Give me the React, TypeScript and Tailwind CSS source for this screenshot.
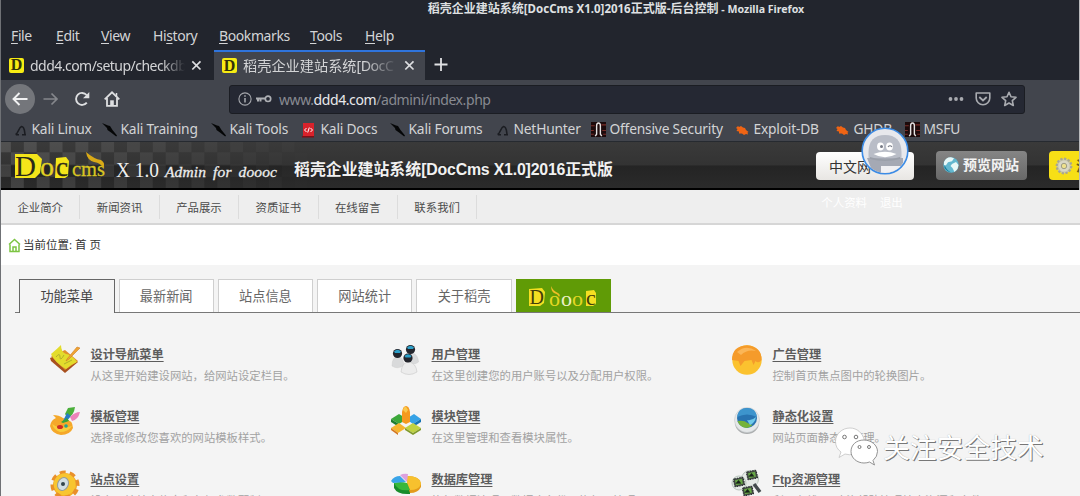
import React from "react";

const CJK = "font-['Noto_Sans','Noto_Sans_CJK_SC',sans-serif]";

function DocIcon() {
  return (
    <span className="flex h-[15px] w-[15px] shrink-0 items-center justify-center rounded-[2px] bg-[#f7ec13] font-['Liberation_Serif',serif] text-[16px] font-bold leading-none text-[#33310a]">
      D
    </span>
  );
}

function CloseX() {
  return (
    <svg width="11" height="11" viewBox="0 0 11 11" className="shrink-0">
      <path d="M1.3 1.3l8.2 8.2M9.5 1.3L1.3 9.5" stroke="#dcdde0" strokeWidth="1.7" fill="none" />
    </svg>
  );
}

function DragonMark() {
  return (
    <svg width="16" height="16" viewBox="0 0 16 16">
      <path d="M2.500 12.500c3-1 3-7 6-8 3 0 3 4 3.500 8M3 12.800h3M9 12.800h4" stroke="#1b1d22" strokeWidth="1.600" fill="none" />
    </svg>
  );
}

function KaliMark() {
  return (
    <svg width="16" height="16" viewBox="0 0 16 16">
      <path d="M0 1l6 2.500 2 .5 2.500 4 4.500 5.500-.8 1L9 10.500 5.500 8 5 6z" fill="#050607" />
    </svg>
  );
}

function DocsMark() {
  return (
    <svg width="14" height="16" viewBox="0 0 14 16">
      <path d="M1 1h11v13H1z" fill="#d9222b" />
      <path d="M0 14h12v1.500H0z" fill="#7c0f16" />
      <path d="M4.500 6L2.500 8l2 2M8.500 6l2 2-2 2M7.300 5.500L5.700 10.500" stroke="#fff" fill="none" />
    </svg>
  );
}

function OffsecMark() {
  return (
    <svg width="15" height="15" viewBox="0 0 16 16">
      <path d="M0 0h16v16H0z" fill="#1c0a0b" />
      <path d="M0 4h4M11 3h5M0 9h3M12 9h4M0 13h3M13 13h3" stroke="#7a2c28" strokeWidth="1.200" />
      <path d="M4.500 15l1.500-2V4q0-3 2-3t2 3v9l1.500 2" stroke="#e6e3e3" strokeWidth="1.500" fill="none" />
    </svg>
  );
}

function ExploitMark() {
  return (
    <svg width="14" height="14" viewBox="0 0 14 14">
      <path d="M1 5l2-2 1 1 2-1 2 1.500 2 .5 1 2 2.500 2-1 .5.500 2-2-.5-2 1-2-1.500-3 0L4 8.500 1.500 8 2.500 6z" fill="#ef6414" />
    </svg>
  );
}

const bookmarks = [
  { label: "Kali Linux", mark: <DragonMark />, slot: "w-[89px]" },
  { label: "Kali Training", mark: <KaliMark />, slot: "w-[109px]" },
  { label: "Kali Tools", mark: <KaliMark />, slot: "w-[91px]" },
  { label: "Kali Docs", mark: <DocsMark />, slot: "w-[88px]" },
  { label: "Kali Forums", mark: <KaliMark />, slot: "w-[105px]" },
  { label: "NetHunter", mark: <DragonMark />, slot: "w-[96px]" },
  { label: "Offensive Security", mark: <OffsecMark />, slot: "w-[144px]" },
  { label: "Exploit-DB", mark: <ExploitMark />, slot: "w-[100px]" },
  { label: "GHDB", mark: <ExploitMark />, slot: "w-[70px]" },
  { label: "MSFU", mark: <OffsecMark />, slot: "w-[70px]" },
];

const menus = [
  { pre: "", key: "F", post: "ile", slot: "w-[45px]" },
  { pre: "", key: "E", post: "dit", slot: "w-[45px]" },
  { pre: "", key: "V", post: "iew", slot: "w-[52px]" },
  { pre: "Hi", key: "s", post: "tory", slot: "w-[66px]" },
  { pre: "", key: "B", post: "ookmarks", slot: "w-[91px]" },
  { pre: "", key: "T", post: "ools", slot: "w-[55px]" },
  { pre: "", key: "H", post: "elp", slot: "w-[40px]" },
];

function BrowserChrome() {
  return (
    <div className="h-[142px] shrink-0 bg-[#22252d] font-['Noto_Sans','Noto_Sans_CJK_SC',sans-serif] text-[#d3d4d6]">
      <div className="flex h-[21px] items-start justify-center pl-[151px] text-[12px] font-bold leading-[17px] text-[#dfe0e2]">
        <span className="whitespace-nowrap">
          稻壳企业建站系统<span className="text-[11.500px]">[DocCms X1.0]2016</span>正式版-后台控制
          <span className="text-[10.600px]"> - Mozilla Firefox</span>
        </span>
      </div>
      <div className="flex h-[29px] items-center pl-[10px] text-[14px] tracking-[-0.4px]">
        {menus.map((m) => (
          <span key={m.key} className={m.slot + " shrink-0 whitespace-nowrap"}>
            {m.pre}
            <span className="underline underline-offset-2">{m.key}</span>
            {m.post}
          </span>
        ))}
      </div>
      <div className="flex h-[30px] text-[14px]">
        <div className="flex w-[213px] items-center pl-[8px]">
          <DocIcon />
          <span className="ml-[6px] w-[155px] whitespace-nowrap tracking-[-0.53px] [mask-image:linear-gradient(to_right,black_85%,transparent)]">
            ddd4.com/setup/checkdb
          </span>
          <span className="ml-[6px]"><CloseX /></span>
        </div>
        <div className="flex w-[211px] items-center border-t-2 border-[#2f74dc] bg-[#42454d] pb-px pl-[8px]">
          <DocIcon />
          <span className="ml-[6px] w-[155px] whitespace-nowrap text-[14.200px] [mask-image:linear-gradient(to_right,black_78%,transparent)]">
            稻壳企业建站系统<span className="tracking-[-0.5px]">[DocC</span>
          </span>
          <span className="ml-[6px]"><CloseX /></span>
        </div>
        <svg width="16" height="16" viewBox="0 0 16 16" className="ml-[8px] mt-[7px]">
          <path d="M8 1v13M1.500 7.500h13" stroke="#e0e1e3" strokeWidth="1.800" />
        </svg>
      </div>
      <div className="h-[62px] border-b border-[#262a30] bg-[#42454d]">
        <div className="flex h-[38px] items-center pl-[4px]">
          <div className="flex h-[30px] w-[30px] items-center justify-center rounded-full bg-[#74767b]">
            <svg width="16" height="14" viewBox="0 0 16 14">
              <path d="M15.500 7H2M7.500 1L1.500 7l6 6" stroke="#f1f1f2" strokeWidth="1.900" fill="none" />
            </svg>
          </div>
          <svg width="16" height="14" viewBox="0 0 16 14" className="ml-[8px]">
            <path d="M.5 7H14M8.500 1.500L14 7l-5.500 5.500" stroke="#85878c" strokeWidth="1.700" fill="none" />
          </svg>
          <svg width="16" height="16" viewBox="0 0 16 16" className="ml-[15px]">
            <path d="M12.800 11.600A6 6 0 1 1 12.600 4" stroke="#dedfe1" strokeWidth="1.900" fill="none" />
            <path d="M15.300 1v6.300H9z" fill="#dedfe1" />
          </svg>
          <svg width="16" height="16" viewBox="0 0 16 16" className="ml-[14px]">
            <path d="M.7 8.300L8 1.300l7.300 7M3 7v7.800h10V7" stroke="#dedfe1" strokeWidth="1.800" fill="none" />
            <path d="M6.200 9.300h3.600v5H6.200z" fill="#dedfe1" />
            <path d="M12.500 2v4" stroke="#dedfe1" strokeWidth="1.500" />
          </svg>
          <div className="ml-[109px] flex h-[29px] w-[796px] items-center rounded-[3px] border border-[#1b1d23] bg-[#252833] pl-[8px] pr-[7px] text-[14px]">
            <svg width="14" height="14" viewBox="0 0 14 14">
              <circle cx="7" cy="7" r="6.100" stroke="#a5a7ac" fill="none" strokeWidth="1.100" />
              <path d="M7 6v4.500M7 3.300v1.500" stroke="#b5b7bb" strokeWidth="1.400" />
            </svg>
            <svg width="16" height="10" viewBox="0 0 16 10" className="ml-[4px]">
              <path d="M0 4.500h9M2 5v2.500M4.500 5v2.500" stroke="#adafb4" strokeWidth="2" />
              <circle cx="12" cy="4.800" r="2.700" stroke="#adafb4" strokeWidth="1.700" fill="none" />
            </svg>
            <span className="ml-[7px] tracking-[-0.41px] text-[#888a91]">
              www.<span className="text-[#e9e9ec]">ddd4.com</span>/admini/index.php
            </span>
            <span className="grow" />
            <svg width="16" height="6" viewBox="0 0 16 6">
              <circle cx="2.500" cy="3" r="1.900" fill="#a9abb0" />
              <circle cx="8" cy="3" r="1.900" fill="#a9abb0" />
              <circle cx="13.500" cy="3" r="1.900" fill="#a9abb0" />
            </svg>
            <svg width="16" height="14" viewBox="0 0 16 14" className="ml-[11px]">
              <path d="M1.200 1h13.600v5a6.800 6.800 0 0 1-13.600 0z" stroke="#a9abb0" strokeWidth="1.600" fill="none" strokeLinejoin="round" />
              <path d="M4.300 5L8 8.500 11.700 5" stroke="#a9abb0" strokeWidth="1.800" fill="none" />
            </svg>
            <svg width="16" height="16" viewBox="0 0 16 16" className="ml-[10px]">
              <path d="M8 1.300l2 4.500 5 .5-3.700 3.300 1 4.900L8 12l-4.300 2.500 1-4.900L1 6.300l5-.5z" stroke="#a9abb0" strokeWidth="1.600" fill="none" strokeLinejoin="round" />
            </svg>
          </div>
        </div>
        <div className="flex h-[23px] items-center pl-[12px] text-[13.800px] tracking-[-0.2px]">
          {bookmarks.map((b) => (
            <span key={b.label} className={b.slot + " flex shrink-0 items-center whitespace-nowrap"}>
              <span className="flex w-[18.500px] shrink-0">{b.mark}</span>
              {b.label}
            </span>
          ))}
        </div>
      </div>
    </div>
  );
}

function Checks() {
  const cells = [];
  for (let r = 0; r < 4; r++) {
    for (let c = 0; c < 24; c++) {
      if ((r + c) % 2 === 0) {
        cells.push(
          <rect key={r + "-" + c} x={c * 12.9 - 3} y={r * 12.3 - 2} width="12.9" height="12.3" fill="#ffffff" opacity={0.12 * (1 - c / 25)} />
        );
      }
    }
  }
  return <svg width="310" height="47" className="absolute left-0 top-0">{cells}</svg>;
}

function AdminHeader() {
  return (
    <div className="relative flex h-[48px] shrink-0 overflow-hidden border-b-2 border-black bg-[linear-gradient(#3a3a3a_0%,#333_50%,#242424_52%,#2b2b2b_100%)]">
      <Checks />
      <svg width="275" height="46" viewBox="0 0 275 46" className="relative ml-[5px] shrink-0">
        <path d="M9 12l22 0 5 5-2 14-5 5H9zM50 16l10-1 3 4-1 15-3 2H49z" fill="#f4e51a" />
        <g className="font-['Liberation_Serif',serif]">
          <text x="9" y="34" fontSize="29" fill="#2a2919">D</text>
          <text x="34" y="34" fontSize="28" fill="#e3d424" stroke="#e3d424" strokeWidth=".4">o</text>
          <text x="50" y="34" fontSize="27" fill="#2a2919" stroke="#2a2919" strokeWidth=".4">c</text>
          <text x="66" y="34" fontSize="22" fill="#d8c522" stroke="#d8c522" strokeWidth=".3" textLength="33" lengthAdjust="spacingAndGlyphs">cms</text>
          <text x="110" y="34.500" fontSize="21" fill="#eee" textLength="43" lengthAdjust="spacingAndGlyphs">X 1.0</text>
          <text x="159" y="34.500" fontSize="15.500" fontStyle="italic" fill="#eee" stroke="#eee" strokeWidth=".3" textLength="112" wordSpacing="3">Admin for doooc</text>
        </g>
        <path d="M80 10q8 7 15 8 5 3 2 8-2-5-9-6-7-2-8-10" fill="#d9aa17" />
      </svg>
      <span className="relative ml-[13px] w-[522px] shrink-0 whitespace-nowrap pt-[16px] font-['Liberation_Sans','Noto_Sans_CJK_SC',sans-serif] text-[15.900px] font-bold leading-[24px] text-[#f1f1f1]">
        稻壳企业建站系统<span className="tracking-[-0.2px]">[DocCms X1.0]2016</span>正式版
      </span>
      <div className="mt-[10px] flex h-[28px] w-[98px] shrink-0 items-center rounded-[4px] bg-[linear-gradient(#fff,#e8e6e3)] pl-[13px] font-['Noto_Sans_CJK_SC',sans-serif] text-[14px] text-[#333]">
        中文网
      </div>
      <div className="ml-[22px] mt-[9px] flex h-[29px] w-[91px] shrink-0 items-center rounded-[4px] bg-[linear-gradient(#858585,#686868)] pb-[2px] pl-[7px] font-['Noto_Sans_CJK_SC',sans-serif] text-[14px] font-bold text-[#f3f3f3]">
        <svg width="16" height="16" viewBox="0 0 16 16" className="mr-[4px] shrink-0">
          <circle cx="8" cy="8" r="7.700" fill="#62b7cf" />
          <path d="M1 5Q3 0 8 .3l3 1-2 3-4 1-2 3-2 0zM9 7l4-2 2.500 3-1 4-3 3-2-4-2-2z" fill="#e8f8f8" />
          <path d="M1.500 11q3 4 7 4.500Q4 14 1.500 8z" fill="#157b98" />
        </svg>
        <span className="whitespace-nowrap">预览网站</span>
      </div>
      <div className="ml-[22px] mt-[9px] flex h-[29px] w-[32px] shrink-0 items-center overflow-hidden rounded-l-[4px] bg-[#f7df16] pl-[6px] font-['Noto_Sans_CJK_SC',sans-serif] text-[14px] font-bold text-[#6b6115]">
        <svg width="18" height="18" viewBox="0 0 18 18" className="mr-[3px] shrink-0">
          <circle cx="9" cy="9" r="7.300" fill="#c8c6ac" stroke="#aaa78e" strokeWidth="2.200" strokeDasharray="2.300 1.500" />
          <circle cx="9" cy="9" r="5.500" fill="#d9d7c5" />
          <circle cx="9" cy="9" r="2.700" fill="#eee18d" stroke="#9f9d85" />
        </svg>
        <span className="whitespace-nowrap">清</span>
      </div>
    </div>
  );
}

function Assistant() {
  return (
    <svg width="50" height="50" viewBox="0 0 50 50" className="absolute left-[859px] top-[126px]">
      <defs>
        <clipPath id="round"><circle cx="25" cy="25" r="22" /></clipPath>
      </defs>
      <circle cx="25" cy="25" r="22.800" fill="#e7e8ec" stroke="#3c8ce6" strokeWidth="1.600" />
      <g clipPath="url(#round)">
        <path d="M8.500 35V26Q9 9 25 9t16.500 17v9z" fill="#b9bdc7" />
        <path d="M7 32h36v5l-4 5v8H11v-8z" fill="#a5a9b4" />
        <path d="M21 40h19v12H21z" fill="#f0f0f3" />
        <path d="M10 31q15 5 30 0v2q-15 4-30 0z" fill="#9a9fa9" />
      </g>
      <ellipse cx="20.500" cy="20.500" rx="3.400" ry="4" fill="#fff" />
      <ellipse cx="29.500" cy="20.500" rx="3.400" ry="4" fill="#fff" />
      <circle cx="21.500" cy="20.500" r="1.500" fill="#777b86" />
      <path d="M28 21q2-2.500 4 0" stroke="#777b86" fill="none" strokeWidth="1.200" />
      <path d="M13.500 28q11.500-4.500 23 0-11.500 6.500-23 0" fill="#fff" />
    </svg>
  );
}

const navItems = ["企业简介", "新闻资讯", "产品展示", "资质证书", "在线留言", "联系我们"];
const tabs = ["最新新闻", "站点信息", "网站统计", "关于稻壳"];

function NoteIcon() {
  return (
    <svg width="32" height="32" viewBox="0 0 32 32">
      <path d="M1 15l15-6 13 10-13 11L2 18z" fill="#a8501e" />
      <path d="M2 13l14-6 13 11-13 9z" fill="#e0912c" />
      <path d="M2 11Q8 6 12 2q0 7 5 9 5 0 11 8-7 3-11 7Q6 20 2 11" fill="#e3dc2c" />
      <path d="M7 14q4-5 4 0t4-2M15 21l8-4" stroke="#b1b02a" fill="none" />
      <path d="M18 16L28 4l3 1-11 11-3 2z" fill="#efa434" stroke="#cf7d24" strokeWidth=".6" />
    </svg>
  );
}

function UsersIcon() {
  const heads = [[7.5, 10.5], [20.5, 6.5], [18, 15]];
  return (
    <svg width="32" height="32" viewBox="0 0 32 32">
      <path d="M2 23q0-9 6-10 5 1 6 9-6 5-12 1M17 19q1-9 6-9 5 2 5.500 9-5 4-11.500 0" fill="#d9dadb" stroke="#c8c8c8" strokeWidth=".4" />
      <path d="M11 29q1-10 8-10 7 1 8 10-8 5-16 0" fill="#ececec" stroke="#c0c0c0" strokeWidth=".5" />
      {heads.map(([x, y]) => (
        <g key={x}>
          <circle cx={x} cy={y} r="4.600" fill="#23252c" />
          <path d={`M${x - 3.5} ${y - 2}q3.500-3.500 7 0l-1 1.500h-5z`} fill="#2c9fc8" />
        </g>
      ))}
    </svg>
  );
}

function BallIcon() {
  return (
    <svg width="32" height="32" viewBox="0 0 32 32">
      <circle cx="16" cy="17" r="14.700" fill="#fbc22f" />
      <path d="M1 17Q1 3 16 2.300 31 4 30.500 17q-3 4-6 1l-2 4-2-5-7 1-4 5-2-5z" fill="#f59b2b" />
      <path d="M6 9q9-8 19-1Q16 6 10 12z" fill="#fbb657" />
    </svg>
  );
}

function PaletteIcon() {
  return (
    <svg width="32" height="32" viewBox="0 0 32 32">
      <path d="M1 21q1-6 6-8l-3-3q6 0 10 3 10 2 10 10-3 7-12 7-9-1-11-9" fill="#f5a82a" />
      <path d="M3 19q8 6 20 2-4 6-12 6-6-2-8-8" fill="#f8cd3c" />
      <path d="M16 9L19 3l7-1q-1 8-7 11z" fill="#4aaf3a" />
      <path d="M14 16l4-8 4 3-5 6z" fill="#267cc5" />
      <path d="M12 17l6-4 2 3-6 2z" fill="#38a23a" />
      <path d="M21 12q5-5 10-5-2 8-8 9z" fill="#ec83b9" />
      <ellipse cx="11" cy="22" rx="3" ry="2" fill="#cd2c24" />
      <circle cx="17" cy="21" r="1.800" fill="#21a494" />
    </svg>
  );
}

function ModulesIcon() {
  return (
    <svg width="32" height="32" viewBox="0 0 32 32">
      <path d="M1 14l8-5 8 5-8 5z" fill="#3ba83a" /><path d="M1 14l8 5v3l-8-5z" fill="#1d7d30" />
      <path d="M16 14l8-5 7 5-8 5z" fill="#36a2e6" /><path d="M31 14l-8 5v3l8-5z" fill="#1573b5" />
      <path d="M1 23l8-5 7 5-8 5z" fill="#f5b52f" /><path d="M1 23l7 5v2l-7-5z" fill="#d4761e" />
      <path d="M15 23l8-5 8 5-8 5z" fill="#bfd242" /><path d="M15 23l8 5 8-5v2l-8 5-8-5z" fill="#819a2b" />
      <path d="M12 7q1-6 4-6t4 6v10l-4 2-4-2z" fill="#f59a1e" /><path d="M13 5q2-7 5 0l-2 3z" fill="#fac94d" />
    </svg>
  );
}

function GlobeIcon() {
  return (
    <svg width="32" height="32" viewBox="0 0 32 32">
      <ellipse cx="16" cy="18" rx="12" ry="11" fill="#a9acad" />
      <circle cx="16" cy="15" r="12.500" fill="#e5e8e9" stroke="#c5cacc" strokeWidth=".6" />
      <circle cx="16" cy="13" r="10" fill="#2873b1" />
      <path d="M6 12q1-9 10-9t10 9q-10-5-20 0" fill="#3d94cd" />
      <path d="M6.500 16q7-1 10 2l5 2q-3 3-6 3-7-1-9-7" fill="#75b33a" />
      <path d="M16 15q5 1 9-3-1 6-6 8z" fill="#6ec9ea" />
    </svg>
  );
}

function GearIcon() {
  return (
    <svg width="32" height="32" viewBox="0 0 32 32">
      <g transform="rotate(20 16 17)">
        <circle cx="16" cy="17" r="12" fill="#f4ad25" stroke="#e9902a" strokeWidth="5" strokeDasharray="5.500 3.920" />
        <circle cx="15.500" cy="16.500" r="11" fill="#f8c52f" />
      </g>
      <ellipse cx="14" cy="16" rx="5.200" ry="6.700" transform="rotate(25 14 16)" fill="#d3dfe2" stroke="#929b9c" />
      <circle cx="14" cy="16" r="2" fill="#35464b" />
    </svg>
  );
}

function PieIcon() {
  return (
    <svg width="32" height="32" viewBox="0 0 32 32">
      <path d="M4 15v5q3 6 13 6h3V16z" fill="#188c2b" />
      <path d="M17 8q13 0 14 8v3q-3 6-11 6l-3-9z" fill="#e39b1b" />
      <path d="M17 8q13 0 14 8-2 6-11 6l-3-7z" fill="#f7c12e" />
      <path d="M4 15q6-2 13 0l3 7q-12 2-16-7" fill="#38b83b" />
      <path d="M1 13q3-5 9-5l6 6-13 1z" fill="#3aa4e8" />
      <path d="M10 7q4-2 8-1l-1 8z" fill="#dca1df" />
    </svg>
  );
}

function FtpIcon() {
  const chips = [[16, 3], [3, 10], [12, 19]];
  return (
    <svg width="32" height="32" viewBox="0 0 32 32">
      <circle cx="19" cy="11" r="8.500" fill="#e4e9e6" stroke="#b7c4bb" />
      <circle cx="8" cy="15" r="7" fill="#e4e9e6" stroke="#b7c4bb" />
      {chips.map(([x, y]) => (
        <g key={x} transform={`rotate(-12 ${x + 5} ${y + 4})`}>
          <rect x={x} y={y} width="10" height="8" rx="1" fill="#454d45" stroke="#22292a" strokeDasharray="1.500 1" />
          <rect x={x + 1.5} y={y + 1.5} width="7" height="5" fill="#66a746" />
          <path d={`M${x + 1} ${y + 5}l4-3 2 4z`} fill="#172219" />
        </g>
      ))}
      <path d="M23 16l6 8" stroke="#444b4e" strokeWidth="3.500" />
    </svg>
  );
}

const features = [
  { title: "设计导航菜单", desc: "从这里开始建设网站，给网站设定栏目。", icon: <NoteIcon /> },
  { title: "用户管理", desc: "在这里创建您的用户账号以及分配用户权限。", icon: <UsersIcon /> },
  { title: "广告管理", desc: "控制首页焦点图中的轮换图片。", icon: <BallIcon /> },
  { title: "模板管理", desc: "选择或修改您喜欢的网站模板样式。", icon: <PaletteIcon /> },
  { title: "模块管理", desc: "在这里管理和查看模块属性。", icon: <ModulesIcon /> },
  { title: "静态化设置", desc: "网站页面静态化管理。", icon: <GlobeIcon /> },
  { title: "站点设置", desc: "设定网站基本信息和各级参数配制。", icon: <GearIcon /> },
  { title: "数据库管理", desc: "执行数据清理、数据库备份、恢复、管理。", icon: <PieIcon /> },
  { title: "Ftp资源管理", desc: "利用在线Ftp功能帮助管理站内资源和文件。", icon: <FtpIcon /> },
];

function Watermark() {
  return (
    <div className="absolute left-[833px] top-[425px] flex items-center">
      <svg width="46" height="42" viewBox="0 0 46 42">
        <path d="M16 3C8 3 1.500 9 1.500 16.500c0 4.500 2 8 5.500 10.500l-2 5.500 6-3.500q5 1.500 8 0C29 29 31 21 30.500 16 29 8 23 3 16 3" fill="#fff" stroke="#bbb" strokeWidth=".7" />
        <path d="M30 15c-8 0-13 5-13 11.500S23 38 30 38q3 0 5.500-1l5 3-1.500-4.500q4.500-4 4.500-9C43.500 20 37 15 30 15" fill="#fff" stroke="#888" strokeWidth=".9" />
        <g fill="#fff" stroke="#777" strokeWidth="1">
          <circle cx="10.500" cy="12" r="1.800" /><circle cx="22" cy="12" r="1.800" />
          <circle cx="25.500" cy="22" r="1.500" /><circle cx="35" cy="22" r="1.500" />
        </g>
      </svg>
      <span className="ml-[3px] mt-[2px] whitespace-nowrap font-['Noto_Sans_CJK_SC',sans-serif] text-[26.800px] leading-[40px] text-white [text-shadow:1px_1px_0_#777,0_0_1px_#aaa]">
        关注安全技术
      </span>
    </div>
  );
}

export default function App() {
  return (
    <div className="relative flex h-[496px] w-[1080px] flex-col overflow-hidden border-l border-[#6f7175] bg-[#f4f4f4]">
      <BrowserChrome />
      <AdminHeader />
      <div className={"flex h-[35px] shrink-0 items-center border-b-2 border-[#d6d6d6] bg-[#eee] text-[11.400px] text-[#4a4a4a] " + CJK}>
        {navItems.map((item) => (
          <span key={item} className="flex h-[24px] w-[79.400px] shrink-0 items-center justify-center border-r border-[#dcdcdc] pt-[3px]">
            {item}
          </span>
        ))}
        <span className="ml-[344px] mt-[-8px] flex gap-[13px] text-white">
          <span>个人资料</span>
          <span>退出</span>
        </span>
      </div>
      <div className={"flex h-[40px] shrink-0 items-center bg-white pl-[7px] text-[11.500px] text-[#333] " + CJK}>
        <svg width="13" height="15" viewBox="0 0 13 15" className="mr-[2px]">
          <path d="M1 6.500L6.500 1.500 12 6.500M2 6.500v7h9v-7M5 13.500V9h3v4.500" stroke="#7cc442" strokeWidth="1.500" fill="none" />
        </svg>
        当前位置: 首 页
      </div>
      <div className={"flex h-[48px] shrink-0 items-end pl-[14px] text-[13.200px] text-[#666] " + CJK}>
        <span className="h-full w-[4px] border-b border-[#777]" />
        <span className="flex h-[34px] w-[95.500px] items-center justify-center border-x border-t border-[#666] pt-px text-[#444]">功能菜单</span>
        {tabs.map((t) => (
          <span key={t} className="flex h-[34px] w-[99.300px] items-stretch border-b border-[#777] pl-[4px]">
            <span className="flex grow items-center justify-center border-x border-t border-[#cfcfcf] bg-white pt-[2px]">{t}</span>
          </span>
        ))}
        <span className="flex h-[34px] w-[99px] border-b border-[#777] pl-[4px]">
          <svg width="95" height="33" viewBox="0 0 95 33" className="bg-[#609b06]">
            <path d="M13 10l13-1 3 4-1 11-4 3H13zM70 12l8-1 2 3v11l-3 2h-7z" fill="#f4df22" />
            <g className="font-['Liberation_Serif',serif]">
              <text x="13.500" y="25" fontSize="20" fill="#433e0c">D</text>
              <text x="33" y="27" fontSize="22" fill="#e4d723">o</text>
              <text x="45" y="27" fontSize="22" fill="#eef0c8">o</text>
              <text x="56" y="27" fontSize="22" fill="#e4d723">o</text>
              <text x="70" y="26" fontSize="22" fill="#433e0c">c</text>
            </g>
            <path d="M35 7q2 5 7 7 3 2 1 4-1-3-5-4-3-2-3-7" fill="#f0bd26" />
          </svg>
        </span>
        <span className="h-full grow border-b border-[#777]" />
      </div>
      <div className="grid auto-rows-[62.300px] grid-cols-[341px_341px_341px] pl-[48px] pt-[31px] font-['Liberation_Sans','Noto_Sans_CJK_SC',sans-serif]">
        {features.map((f) => (
          <div key={f.title} className="flex">
            <span className="-mt-px w-[41.500px] shrink-0">{f.icon}</span>
            <div className="whitespace-nowrap pt-[2px]">
              <div className="text-[12.200px] font-bold leading-[18px] text-[#5c5c5c] underline underline-offset-2">{f.title}</div>
              <div className="mt-[3px] text-[11.350px] leading-[18px] text-[#a2a2a2]">{f.desc}</div>
            </div>
          </div>
        ))}
      </div>
      <Assistant />
      <Watermark />
      <div className="absolute right-0 top-0 h-[190px] w-px bg-[#b9babc]" />
    </div>
  );
}
